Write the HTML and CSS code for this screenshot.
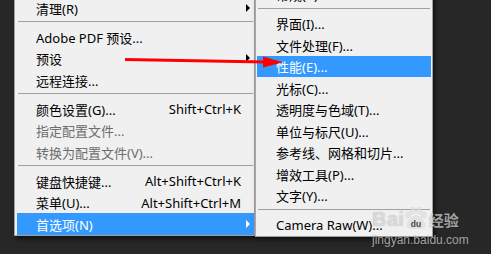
FILE: index.html
```html
<!DOCTYPE html>
<html lang="zh-CN">
<head>
  <meta charset="UTF-8" />
  <title>首选项 - 性能</title>
  <link rel="stylesheet" href="styles.css">
</head>
<body>
  <div class="stage">
    <div class="menus">
      <ul class="menu main-menu">
        <li class="item"><span class="label">清理(R)</span><span class="arrow"></span></li>
        <li class="sep"></li>
        <li class="item"><span class="label">Adobe PDF 预设...</span><span class="arrow none"></span></li>
        <li class="item"><span class="label">预设</span><span class="arrow"></span></li>
        <li class="item"><span class="label">远程连接...</span><span class="arrow none"></span></li>
        <li class="sep"></li>
        <li class="item"><span class="label">颜色设置(G)...</span><span class="keys">Shift+Ctrl+K</span><span class="arrow none"></span></li>
        <li class="item disabled"><span class="label">指定配置文件...</span><span class="arrow none"></span></li>
        <li class="item disabled"><span class="label">转换为配置文件(V)...</span><span class="arrow none"></span></li>
        <li class="sep"></li>
        <li class="item"><span class="label">键盘快捷键...</span><span class="keys">Alt+Shift+Ctrl+K</span><span class="arrow none"></span></li>
        <li class="item"><span class="label">菜单(U)...</span><span class="keys">Alt+Shift+Ctrl+M</span><span class="arrow none"></span></li>
        <li class="item active"><span class="label">首选项(N)</span><span class="arrow"></span></li>
      </ul>

      <ul class="menu sub-menu">
        <li class="item"><span class="label">常规(K)...</span></li>
        <li class="sep"></li>
        <li class="item"><span class="label">界面(I)...</span></li>
        <li class="item"><span class="label">文件处理(F)...</span></li>
        <li class="item active"><span class="label">性能(E)...</span></li>
        <li class="item"><span class="label">光标(C)...</span></li>
        <li class="item"><span class="label">透明度与色域(T)...</span></li>
        <li class="item"><span class="label">单位与标尺(U)...</span></li>
        <li class="item"><span class="label">参考线、网格和切片...</span></li>
        <li class="item"><span class="label">增效工具(P)...</span></li>
        <li class="item"><span class="label">文字(Y)...</span></li>
        <li class="sep"></li>
        <li class="item"><span class="label">Camera Raw(W)...</span></li>
      </ul>
    </div>

    <!-- red pointer drawn over the menus -->
    <svg class="pointer" width="491" height="254" viewBox="0 0 491 254">
      <line x1="125" y1="59.5" x2="266" y2="62" stroke="#ff0000" stroke-width="3" />
      <polygon points="263,56.5 283,62.3 263,67.5" fill="#ff0000" />
    </svg>

    <div class="watermark">
      <div class="wm-logo">
        <span class="wm-bai">Bai</span>
        <svg class="wm-paw" width="22" height="22" viewBox="0 0 22 22">
          <ellipse cx="3.2" cy="8" rx="2.6" ry="3.2" />
          <ellipse cx="8" cy="3.4" rx="2.6" ry="3.2" />
          <ellipse cx="14" cy="3.4" rx="2.6" ry="3.2" />
          <ellipse cx="18.8" cy="8" rx="2.6" ry="3.2" />
          <path d="M11 8.5 C7 8.5 2 14.5 2 18 C2 21.5 6 22 11 21.2 C16 22 20 21.5 20 18 C20 14.5 15 8.5 11 8.5 Z" />
          <text x="11" y="19.5" text-anchor="middle">du</text>
        </svg>
        <span class="wm-jy">经验</span>
      </div>
      <div class="wm-url">jingyan.baidu.com</div>
    </div>
  </div>
</body>
</html>
```

FILE: styles.css
```css
html, body {
  margin: 0;
  padding: 0;
}
body {
  background-color: #272727;
  font-family: "Noto Sans", "Noto Sans CJK SC", sans-serif;
  font-size: 13px;
  color: #000;
  width: 491px;
  height: 254px;
  overflow: hidden;
}
.stage {
  position: relative;
  width: 491px;
  height: 254px;
  overflow: hidden;
}
.menus {
  display: flex;
  align-items: flex-start;
  padding-left: 14px;
}
.menu {
  list-style: none;
  margin: 0;
  background-color: #f0f0f0;
  border: 1px solid #a0a0a0;
  border-top: none;
  box-sizing: border-box;
  box-shadow: 2px 3px 4px rgba(0, 0, 0, 0.55);
}
.main-menu {
  width: 241px;
  margin-top: -3px;
  padding: 0 0 0 2px;
}
.sub-menu {
  width: 178px;
  margin-top: -16.5px;
  padding: 0 1px 1px 1px;
  border-left-color: #a8a8a8;
}
.item {
  display: flex;
  align-items: center;
  height: 21.5px;
  padding-left: 19px;
  white-space: nowrap;
}
.item .label {
  flex: 1;
  padding-top: 1px;
}
.item .keys {
  padding-top: 1px;
}
.item .arrow {
  width: 13px;
  height: 100%;
  display: flex;
  align-items: center;
  justify-content: center;
}
.item .arrow::after {
  content: "";
  border-left: 4px solid #000;
  border-top: 4px solid transparent;
  border-bottom: 4px solid transparent;
  margin-left: 1px;
}
.item .arrow.none::after {
  display: none;
}
.item.disabled {
  color: #6d6d6d;
}
.item.active {
  background-color: #3399ff;
  color: #fff;
}
.item.active .arrow::after {
  border-left-color: #fff;
}
.sep {
  height: 7.5px;
  box-sizing: border-box;
  padding-top: 2.5px;
}
.sep::before {
  content: "";
  display: block;
  height: 1px;
  background-color: #a0a0a0;
  margin: 0 1px 0 1px;
}
.pointer {
  position: absolute;
  left: 0;
  top: 0;
}
.watermark {
  position: absolute;
  left: 372px;
  top: 207px;
  color: rgba(255, 255, 255, 0.6);
  font-family: "Liberation Sans", "Noto Sans CJK SC", sans-serif;
  text-shadow: 0 0 1px rgba(0, 0, 0, 0.35);
}
.wm-logo {
  display: flex;
  align-items: flex-end;
  height: 22px;
}
.wm-bai {
  font-size: 20px;
  font-weight: bold;
  line-height: 20px;
  letter-spacing: 0.5px;
}
.wm-paw {
  fill: rgba(255, 255, 255, 0.6);
  margin: 0 2px 0 0;
  filter: drop-shadow(0 0 0.6px rgba(0, 0, 0, 0.4));
}
.wm-paw text {
  font-size: 8.5px;
  font-weight: bold;
  fill: rgba(70, 70, 70, 0.85);
  font-family: "Liberation Sans", sans-serif;
}
.wm-jy {
  font-size: 15px;
  font-weight: bold;
  line-height: 18px;
  font-family: "Noto Sans CJK SC", sans-serif;
}
.wm-url {
  font-size: 12px;
  line-height: 14px;
  margin-top: 4px;
}
```
